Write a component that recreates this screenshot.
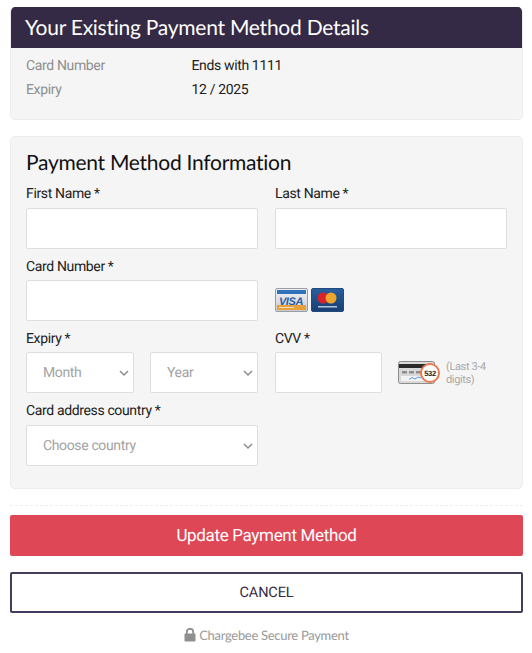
<div class="page">
  <section class="existing">
    <h2 class="bar">Your Existing Payment Method Details</h2>
    <dl class="details">
      <div class="row"><dt>Card Number</dt><dd>Ends with 1111</dd></div>
      <div class="row"><dt>Expiry</dt><dd>12 / 2025</dd></div>
    </dl>
  </section>

  <section class="form">
    <h3>Payment Method Information</h3>
    <div class="grid">
      <div class="field"><span class="label">First Name *</span><div class="input"></div></div>
      <div class="field"><span class="label">Last Name *</span><div class="input"></div></div>

      <div class="field"><span class="label">Card Number *</span><div class="input"></div></div>
      <div class="field cards">
        <svg width="33" height="24" viewBox="0 0 33 24">
          <defs>
            <linearGradient id="silver" x1="0" y1="0" x2="0" y2="1"><stop offset="0" stop-color="#f2f3f5"/><stop offset="1" stop-color="#c9ccd1"/></linearGradient>
            <linearGradient id="navy" x1="0" y1="0" x2="0" y2="1"><stop offset="0" stop-color="#2a5f9e"/><stop offset="1" stop-color="#173f73"/></linearGradient>
          </defs>
          <rect x="0.5" y="0.5" width="32" height="23" rx="1.5" fill="url(#silver)" stroke="#9a9da3"/>
          <rect x="2" y="2" width="29" height="4" fill="#2f72ba"/>
          <text x="16" y="16.5" class="visa">VISA</text>
          <rect x="2" y="17" width="29" height="5" fill="#e8a03a"/>
          <rect x="4" y="19" width="15" height="1" fill="#f6e3c2"/>
        </svg>
        <svg width="33" height="24" viewBox="0 0 33 24">
          <rect x="0.5" y="0.5" width="32" height="23" rx="1.5" fill="url(#navy)" stroke="#234a7c"/>
          <circle cx="12" cy="10" r="5.5" fill="#d8232a"/>
          <circle cx="20" cy="10" r="5.5" fill="#efa52b"/>
          <rect x="7" y="18" width="19" height="1.5" fill="#b4c4da"/>
        </svg>
      </div>

      <div class="field">
        <span class="label">Expiry *</span>
        <div class="pair">
          <div class="select"><span>Month</span><svg class="chev" width="10" height="7" viewBox="0 0 10 7"><path d="M1 1l4 4 4-4" /></svg></div>
          <div class="select"><span>Year</span><svg class="chev" width="10" height="7" viewBox="0 0 10 7"><path d="M1 1l4 4 4-4" /></svg></div>
        </div>
      </div>
      <div class="field">
        <span class="label">CVV *</span>
        <div class="cvv">
          <div class="input"></div>
          <svg class="cvv-icon" width="43" height="24" viewBox="0 0 43 24">
            <rect x="0.5" y="0.5" width="36" height="22" rx="2" fill="#d9d9d9" stroke="#8d8d8d"/>
            <rect x="1" y="3" width="35" height="4" fill="#2b2b2b"/>
            <rect x="4" y="10" width="5" height="2.5" fill="#8f8f8f"/>
            <rect x="11" y="10" width="5" height="2.5" fill="#8f8f8f"/>
            <rect x="18" y="10" width="5" height="2.5" fill="#8f8f8f"/>
            <rect x="3" y="15" width="28" height="5" fill="#f3f3f3"/>
            <path d="M11 18.5l3-2 3 1.5 3-2 3 1" fill="none" stroke="#5a9bdc"/>
            <circle cx="32" cy="12" r="9" fill="#fff" stroke="#ea7a50" stroke-width="2"/>
            <text x="32" y="15" class="num">532</text>
          </svg>
          <span class="hint">(Last 3-4 digits)</span>
        </div>
      </div>

      <div class="field">
        <span class="label">Card address country *</span>
        <div class="select"><span>Choose country</span><svg class="chev" width="10" height="7" viewBox="0 0 10 7"><path d="M1 1l4 4 4-4" /></svg></div>
      </div>
    </div>
  </section>

  <div class="sep"></div>

  <button class="primary">Update Payment Method</button>
  <button class="cancel">CANCEL</button>

  <div class="secure">
    <svg width="12" height="14" viewBox="0 0 12 14"><path d="M2.8 6V4a3.2 3.2 0 0 1 6.4 0v2" fill="none" stroke="#8f8f8f" stroke-width="1.8"/><rect x="0.5" y="5.5" width="11" height="8" rx="1" fill="#8f8f8f"/></svg>
    <span>Chargebee Secure Payment</span>
  </div>
</div>

<style>
  :global(body) { margin: 0; background: #fff; }
  .page {
    padding: 7px 9px 0 10px;
    font-family: Roboto, "Liberation Sans", sans-serif;
    font-size: 14px;
    letter-spacing: -0.36px;
    color: #212121;
    text-rendering: geometricPrecision;
  }
  .existing {
    background: #f5f5f5;
    border: 1px solid #ececec;
    border-top: 0;
    border-radius: 5px;
    height: 113px;
    box-sizing: border-box;
    overflow: hidden;
  }
  .bar {
    margin: 0 -1px;
    height: 41px;
    background: #342a45;
    color: #fff;
    font: 400 21px/41px Lato, sans-serif;
    letter-spacing: -0.25px;
    padding-left: 15px;
  }
  .details { margin: 6px 0 0; padding: 0 15px; }
  .row { display: flex; height: 24px; line-height: 24px; }
  dt { width: 165.5px; color: #8f8f8f; }
  dd { margin: 0; color: #212121; }
  .form {
    margin-top: 16px;
    background: #f5f5f5;
    border: 1px solid #ececec;
    border-radius: 5px;
    height: 353px;
    box-sizing: border-box;
    padding: 12px 15px 0;
  }
  h3 {
    margin: 0;
    font: 400 21px/27px Lato, sans-serif;
    letter-spacing: -0.27px;
    color: #111;
  }
  .grid {
    display: grid;
    grid-template-columns: 232px 232px;
    column-gap: 17px;
    row-gap: 4px;
    margin-top: 4.4px;
  }
  .label { display: block; height: 27.33px; line-height: 28px; color: #212121; }
  .input {
    height: 41px;
    box-sizing: border-box;
    background: #fff;
    border: 1px solid #dedede;
    border-radius: 2px;
  }
  .cards { display: flex; align-items: center; gap: 3px; padding-top: 26px; }
  .visa { font: italic 700 11px "Liberation Sans", sans-serif; fill: #2a5da8; text-anchor: middle; }
  .pair { display: flex; gap: 16px; }
  .pair .select { flex: 1; }
  .select {
    position: relative;
    height: 41px;
    box-sizing: border-box;
    background: #fff;
    border: 1px solid #dedede;
    border-radius: 2px;
    line-height: 40px;
    padding-left: 16px;
    color: #a3a3a3;
  }
  .chev { position: absolute; right: 4px; top: 17px; }
  .chev path { fill: none; stroke: #8d8d8d; stroke-width: 1.5; }
  .cvv { display: flex; align-items: center; }
  .cvv .input { width: 107px; flex: none; }
  .cvv-icon { margin-left: 16px; flex: none; }
  .num { font: 700 7.5px "Liberation Sans", sans-serif; text-anchor: middle; fill: #222; }
  .hint { margin-left: 5px; width: 50px; font-size: 11px; line-height: 13px; color: #a9a9a9; }
  .sep { margin-top: 16px; border-top: 1px dashed #eeeeee; }
  button {
    display: block;
    width: 100%;
    height: 41px;
    box-sizing: border-box;
    font-family: Roboto, sans-serif;
    border-radius: 2px;
    text-rendering: geometricPrecision;
  }
  .primary {
    margin-top: 9px;
    background: #de4756;
    color: #fff;
    border: 0;
    font-size: 17px;
    letter-spacing: -0.33px;
  }
  .cancel {
    margin-top: 16px;
    background: #fff;
    color: #342a45;
    border: 2px solid #453b5c;
    font-size: 14.5px;
    letter-spacing: -0.15px;
  }
  .secure {
    margin-top: 13px;
    display: flex;
    justify-content: center;
    align-items: center;
    gap: 3px;
    font: 400 13px/18px Lato, sans-serif;
    letter-spacing: -0.3px;
    color: #9a9a9a;
  }
</style>
